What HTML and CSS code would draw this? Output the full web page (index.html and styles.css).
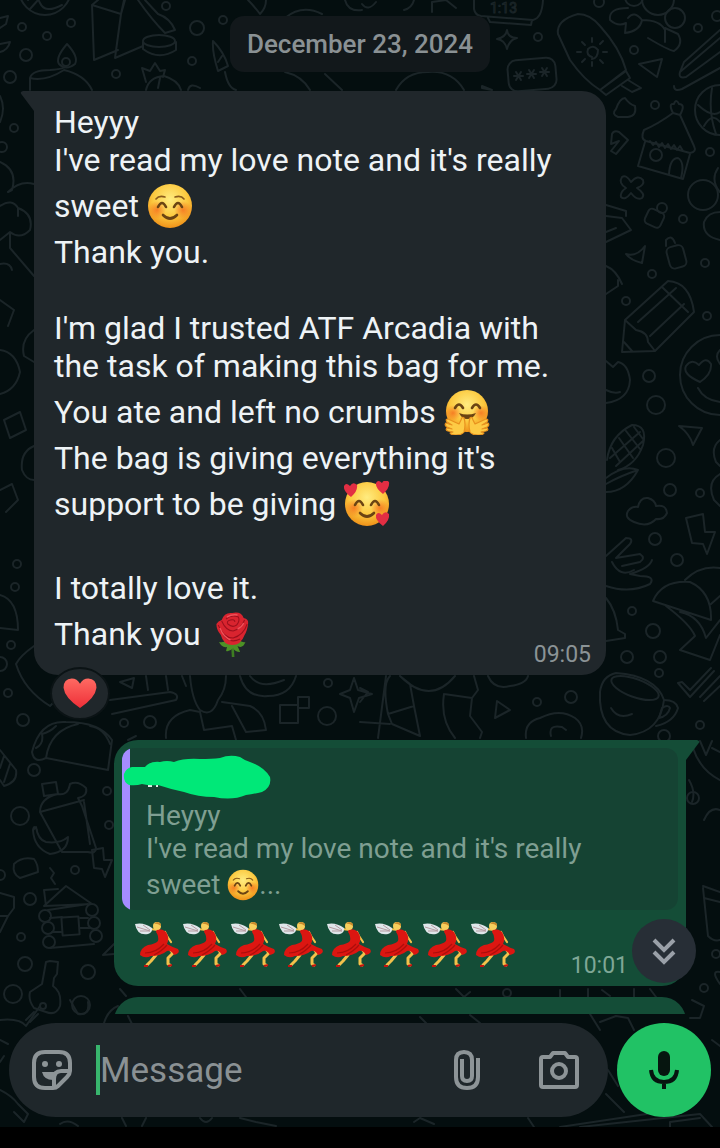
FILE: index.html
```html
<!DOCTYPE html>
<html lang="en">
<head>
    <meta charset="UTF-8">
    <meta name="viewport" content="width=device-width, initial-scale=1.0">
    <title>Chat</title>
    <link rel="stylesheet" href="styles.css">
</head>
<body>

<!-- shared emoji -->
<svg class="defs" aria-hidden="true">
    <defs>
        <radialGradient id="skin" cx="50%" cy="35%" r="65%">
            <stop offset="0" stop-color="#ffec80"/>
            <stop offset="0.6" stop-color="#fcc93f"/>
            <stop offset="1" stop-color="#ef9119"/>
        </radialGradient>
        <radialGradient id="blush">
            <stop offset="0" stop-color="#f4661b" stop-opacity="0.75"/>
            <stop offset="1" stop-color="#f4661b" stop-opacity="0"/>
        </radialGradient>
        <linearGradient id="heart-red" x1="0" y1="0" x2="0" y2="1">
            <stop offset="0" stop-color="#ff6a62"/>
            <stop offset="1" stop-color="#ee2f38"/>
        </linearGradient>
        <symbol id="face" viewBox="0 0 46 46">
            <circle cx="23" cy="23" r="22" fill="url(#skin)"/>
            <circle cx="10" cy="27" r="9" fill="url(#blush)"/>
            <circle cx="36" cy="27" r="9" fill="url(#blush)"/>
            <g fill="none" stroke="#6b4413" stroke-width="2.6" stroke-linecap="round">
                <path d="M11 24Q15 16 19 24M27 24Q31 16 35 24"/>
                <path d="M16 32Q23 39 30 32"/>
            </g>
        </symbol>
        <symbol id="smile" viewBox="0 0 46 46">
            <use href="#face"/>
            <path d="M9 16Q12 12 18 14M28 14Q34 12 37 16" fill="none" stroke="#8a5a1b" stroke-width="1.6" stroke-linecap="round"/>
        </symbol>
        <symbol id="hug" viewBox="0 0 46 46">
            <circle cx="23" cy="22" r="21" fill="url(#skin)"/>
            <circle cx="9" cy="24" r="8" fill="url(#blush)"/>
            <circle cx="37" cy="24" r="8" fill="url(#blush)"/>
            <path d="M11 19Q15 12 19 19M28 19Q32 12 36 19" fill="none" stroke="#6b4413" stroke-width="2.6" stroke-linecap="round"/>
            <path d="M15 24Q23 27 32 24Q29 30 23 30Q18 30 15 24Z" fill="#6b4413"/>
            <g fill="#fdcb45" stroke="#e8921e" stroke-width="1.2" stroke-linejoin="round">
                <path id="palm" d="M20 43Q22 35 20 29Q18 27 17 31L15 35L4 30Q1 30 3 33L8 36L2 34Q0 36 3 38L8 40L3 39Q1 41 4 42L9 43L6 44Q7 46 12 46Q18 46 20 43Z"/>
                <use href="#palm" transform="translate(46 0) scale(-1 1)"/>
            </g>
        </symbol>
        <symbol id="heart" viewBox="0 0 34 32">
            <path d="M17 31Q1 20 0 10Q0 1 8.500 0.500Q14 0.500 17 6Q20 0.500 25.500 0.500Q34 1 34 10Q33 20 17 31Z" fill="url(#heart-red)"/>
        </symbol>
        <symbol id="hearts" viewBox="0 0 46 46">
            <use href="#face"/>
            <g fill="#e22e43">
                <path id="mini" d="M7 16Q-1 10 0 5Q2 1 6 5Q9 0 13 4Q14 10 7 16Z"/>
                <use href="#mini" transform="translate(32 -3)"/>
                <use href="#mini" transform="translate(32 29)"/>
            </g>
        </symbol>
        <symbol id="rose" viewBox="0 0 46 46">
            <g transform="translate(3 0) scale(.88 1)">
                <path d="M23 30L24 46" stroke="#3d7d22" stroke-width="3"/>
                <path d="M8 31Q14 32 18 28Q24 32 29 28Q35 32 38 31Q35 38 29 35L32 41Q26 41 24 37Q20 41 16 40L17 36Q11 37 8 31Z" fill="#4d9126"/>
                <path d="M5 13Q7 10 11 9Q14 1 23 2Q33 0 36 7Q42 8 41 13Q40 20 37 24Q33 34 23 34Q13 34 10 24Q5 19 5 13Z" fill="#d9242f"/>
                <path d="M11 10Q16 20 24 20Q33 18 37 9M7 14Q13 27 24 27Q36 24 40 13M16 8Q22 3 30 6Q32 10 28 14Q23 17 18 13Q16 10 21 9Q26 8 26 11M13 24Q20 33 32 28" fill="none" stroke="#9c101d" stroke-width="1.2"/>
                <path d="M9 17Q13 26 21 29M29 18Q34 16 36 12M17 6Q23 3 29 4" fill="none" stroke="#f0525b" stroke-width="1.5"/>
            </g>
        </symbol>
        <symbol id="dancer" viewBox="0 0 48 48">
            <g fill="none" stroke="#f3c14b" stroke-width="3" stroke-linecap="round" stroke-linejoin="round">
                <path d="M23 35L18 41L14 45"/>
                <path d="M37 29L40 33L35 38L35 44L37 45"/>
                <path d="M32 12L34 16L38 22" stroke-width="2.2"/>
                <path d="M17 9L25 10" stroke-width="2.2"/>
            </g>
            <path d="M24 9Q30 9 33 12Q37 18 34 24Q39 27 45 29Q48 33 41 35Q38 30 34 31Q28 36 18 36Q12 39 7 35Q7 28 15 25Q22 24 25 21Q26 16 23 12Z" fill="#dc1611"/>
            <path d="M12 33Q23 33 31 24M21 35Q29 31 34 25" fill="none" stroke="#ad0e0c" stroke-width="1.2"/>
            <path d="M11 46L15 46M35 46L39 45" stroke="#c3130f" stroke-width="2"/>
            <path d="M2 4Q11 2 19 8Q20 12 15 14Q4 16 2 4Z" fill="#dfe6ea"/>
            <path d="M4 7L17 11M7 11L17 11M10 5L17 10" stroke="#b59ba0" stroke-width="1"/>
            <circle cx="24" cy="6" r="4" fill="#f6cf5d"/>
            <path d="M21 4Q24 0 28 4L28 6Q24 3 21 4Z" fill="#c98a2c"/>
        </symbol>
    </defs>
</svg>

<div class="app">
    <main class="screen">

        <!-- doodle wallpaper -->
        <svg class="wallpaper" viewBox="0 0 720 1127" preserveAspectRatio="xMidYMin slice" aria-hidden="true">
            <!-- top strip -->
            <circle cx="45" cy="-11" r="26"/><path d="M28 0Q35 -8 40 3T62 5M38 0L30 9"/>
            <path d="M92 5L121 14L124 0M92 5L94 60L118 50M121 14L115 58L143 46M92 5L98 0M125 0L121 14"/>
            <path d="M138 0Q152 20 165 33L175 30Q170 18 158 14L145 0"/>
            <ellipse cx="159" cy="41" rx="16" ry="6"/><path d="M143 42V49Q159 61 176 50V42"/>
            <path d="M67 44Q55 58 59 64Q66 71 75 64Q79 57 67 44Z"/><circle cx="66" cy="62" r="4"/>
            <path d="M30 90V78Q32 70 50 70Q65 69 66 66M30 78Q45 82 64 70Q85 75 92 90"/>
            <path d="M146 90Q149 77 164 76Q178 80 181 90M146 82L142 68L150 71L155 63L160 71L165 70L163 77M158 88L160 78M188 90Q190 82 200 88"/>
            <path d="M213 41Q212 52 218 71L228 66Q224 52 213 41ZM225 72Q228 88 236 90M285 72Q302 76 310 90M325 74L342 90M222 56L218 62"/>
            <path d="M248 0Q254 6 260 14Q266 8 266 0M285 18Q302 4 322 14M345 0Q348 12 362 10"/>
            <path d="M362 4Q368 12 376 2M404 10Q412 8 414 0M432 12V2L446 0L456 8M396 90Q406 72 428 72Q452 70 464 90M482 88L492 90L482 86Z"/>
            <path d="M474 0V9Q475 15 481 16L533 20Q542 18 543 0M488 18L490 22L531 25L532 20"/>
            <text x="490" y="13">1:13</text>
            <path d="M507 30Q508 38 517 38Q509 40 507 49Q505 40 497 39Q506 37 507 30Z"/>
            <rect x="508" y="59" width="48" height="31" rx="9" transform="rotate(-5 532 74)"/>
            <path d="M514 76h9M516 72l5 8M521 72l-5 8M527 74h9M529 70l5 8M534 70l-5 8M540 72h9M542 68l5 8M547 68l-5 8"/>
            <path d="M558 34Q556 20 578 14Q590 14 600 26Q620 48 626 70L600 90Q584 80 570 60ZM600 90L626 71L630 78L606 95ZM628 80L641 88L632 92L622 86"/>
            <path d="M592 57Q586 55 588 49Q593 44 598 50Q598 58 592 59M592 38v4M592 62v4M577 52h4M603 52h4M582 42l3 3M600 60l3 3M582 62l3-3M600 44l3-3"/>
            <circle cx="634" cy="-3" r="9"/><circle cx="658" cy="-1" r="16"/><circle cx="675" cy="18" r="10"/>
            <path d="M628 8Q608 8 610 20Q618 27 626 23L625 33Q640 31 642 20Q634 10 628 18M648 38Q668 50 674 51Q684 44 678 34L665 28M642 20Q660 20 665 30V42"/>
            <path d="M639 64L662 59L657 77ZM720 38L680 72Q678 79 686 77L720 52M674 86Q674 92 682 89L720 68M720 30L684 62L680 72"/>
            <!-- right column -->
            <circle cx="720" cy="110" r="25"/><path d="M698 105Q712 118 720 112M712 88Q708 112 716 134M704 126Q712 112 720 122"/>
            <path d="M616 109Q620 98 625 98Q629 104 635 106Q637 116 628 117H618Q611 114 616 109Z"/>
            <path d="M612 134Q614 130 619 132L628 140L616 154L611 151L619 141L611 144Z"/>
            <path d="M673 113Q658 124 644 130Q640 139 646 141L690 153Q697 152 694 146L680 115ZM673 113Q668 103 674 104Q676 98 679 104Q686 104 680 115M645 142L638 166L683 179L690 154M650 141l3 4 3-3 3 5 3-4 3 5 3-4 3 5 3-4 3 5 3-4 3 5"/>
            <circle cx="656" cy="155" r="6"/><path d="M669 174Q670 158 678 158Q685 162 681 178"/>
            <path d="M622 177Q626 174 631 182Q638 174 643 180Q645 185 637 188Q646 194 642 198Q637 201 631 193Q625 201 621 197Q620 192 626 188Q618 183 622 177Z"/>
            <circle cx="703" cy="195" r="15"/><path d="M718 168Q710 180 720 192"/><path d="M720 240Q702 236 704 222Q708 212 720 212"/>
            <rect x="646" y="210" width="17" height="16" rx="4" transform="rotate(25 654 218)"/><circle cx="662" cy="208" r="5"/>
            <rect x="668" y="246" width="17" height="22" rx="5" transform="rotate(-15 676 257)"/><path d="M666 246V240Q672 234 675 243"/>
            <path d="M606 205L626 211V216M606 216L622 218L631 230L606 242M606 232L616 228M626 254Q637 257 645 246L642 263Q630 260 626 254ZM606 266Q616 270 622 284"/>
            <path d="M622 352L625 320L668 281Q690 282 694 312L655 351ZM625 320L636 330Q648 332 648 342L655 351M638 322L676 288M650 336L684 304M662 287L688 312M624 342L632 351M606 294L618 286V280"/>
            <circle cx="720" cy="375" r="40"/><path d="M700 382Q682 374 686 366Q692 358 699 365Q706 356 711 364Q712 374 700 382ZM698 388Q704 400 720 402M720 364Q714 356 720 350"/>
            <path d="M606 403Q629 400 630 380Q628 364 618 362L613 367L606 361M606 390Q614 394 620 392"/>
            <path d="M607 460Q610 436 632 425Q648 425 643 445Q636 465 618 470M612 448l8 14M619 438l14 20M626 431l14 18M634 427l9 12M610 458l30-26M616 466l28-26M606 478Q624 464 638 470Q626 492 606 492M606 484Q620 476 638 470"/>
            <path d="M679 426L702 428L693 445Q690 434 679 426ZM720 440Q710 448 716 462L720 466M720 474Q706 482 714 500L720 506"/>
            <path d="M634 522Q624 518 628 511Q632 506 638 507Q640 497 648 498Q655 500 656 506Q666 504 667 513Q664 520 656 519Q648 528 634 522Z"/>
            <path d="M686 518L703 514L705 532L715 532L707 554L703 544L692 543ZM606 556L626 538Q634 538 630 544L616 558L640 554Q646 558 640 562L622 566"/>
            <path d="M606 586Q630 594 650 584Q656 576 640 576L630 574Q650 568 652 560M612 562Q620 578 634 570"/>
            <path d="M653 601Q662 580 690 582Q712 592 711 620ZM685 580Q700 565 720 568M666 606Q690 624 695 636L680 650L710 660L720 635M680 612Q700 616 706 638L720 620M711 604L720 596"/>
            <path d="M606 598Q616 610 618 630L625 634V638L606 641"/>
            <path d="M600 692Q602 676 616 673Q656 676 664 700Q660 732 630 735Q598 732 600 692Z"/><ellipse cx="635" cy="688" rx="25" ry="9" transform="rotate(20 635 688)"/>
            <path d="M664 700Q676 700 678 708Q674 722 656 726M662 708Q668 704 670 708Q668 716 659 718ZM611 708Q618 720 632 714"/>
            <path d="M678 683L690 697L714 671M678 683L682 682L690 690L711 668M700 697L720 676M704 701L720 686"/>
            <path d="M497 701L510 710L495 718ZM526 738Q524 722 540 718Q560 708 575 718Q585 725 581 738M551 736Q548 724 562 727L566 730"/>
            <!-- band between the bubbles -->
            <path d="M386 676L378 738M390 676Q382 684 388 714L414 706L410 684L400 676M388 714L392 724L420 736L414 706M360 722L390 724M400 676Q430 706 455 676M444 694Q440 720 455 738M444 694L472 698L470 716L482 732L480 738M472 698L478 690L474 676M488 676Q494 690 510 686Q526 684 528 676"/>
            <path d="M360 688L368 692L360 702M354 678L358 690L372 694L359 698L354 712L350 698L340 694L350 690Z"/>
            <rect x="280" y="705" width="18" height="18"/><rect x="298" y="697" width="11" height="11"/>
            <path d="M240 676Q246 698 268 696Q290 696 296 676M250 676Q260 690 284 680"/>
            <path d="M190 676Q192 700 200 710Q212 718 218 700Q226 690 226 676M166 738Q164 716 190 710L200 712L204 730L232 726L236 740M222 702L250 706Q264 712 266 730L246 732L232 706"/>
            <path d="M110 700L170 692Q180 694 176 700L112 714M120 682L134 678L132 688ZM146 676L148 690M168 690L166 676M182 676L186 686M128 740L136 736"/>
            <!-- left column -->
            <path d="M0 96Q6 108 0 122M0 44L10 42Q8 50 0 52M0 18L8 16L6 24L0 28"/>
            <path d="M0 162Q18 170 12 190L8 192M8 192Q20 180 34 184M0 206Q12 198 18 208V216M18 208Q34 214 30 230Q20 240 10 232L0 240M10 232V248L34 276M0 264Q10 262 12 270"/>
            <path d="M0 300L14 310L8 326M34 330Q20 340 24 356L34 362M0 350Q16 352 20 372Q16 390 0 394M4 420L20 412L26 430L10 438ZM34 446Q20 452 22 470Q26 480 34 480M0 490L12 484L18 500L6 512"/>
            <path d="M0 595Q18 600 18 630L0 628M34 646Q20 656 16 664Q24 690 50 706L62 694"/>
            <path d="M32 752Q40 720 66 722Q100 722 112 740L108 770L46 758Q34 764 32 752ZM46 758Q50 730 78 724M36 748Q44 744 42 734Q50 732 56 726M90 726Q104 728 110 744"/>
            <path d="M0 750L16 770Q18 782 4 786L0 780M4 756L0 768M10 764L4 782"/>
            <path d="M42 784L56 782L58 794L44 796ZM40 812Q40 798 58 794Q68 796 70 784Q78 780 86 788Q88 796 78 798L82 806L96 848Q96 854 88 852L62 852L40 812ZM40 812L84 800M84 802L90 844"/>
            <path d="M36 827Q38 840 46 842Q60 844 68 837Q68 852 50 854Q34 848 33 830ZM33 830Q34 824 37 830"/>
            <path d="M14 864Q22 856 34 859Q38 864 38 872L20 878Q12 874 14 864ZM92 850L103 848L104 860L112 860L105 877L102 869L94 868Z"/>
            <path d="M50 868L54 873L51 878L55 884M44 906L66 886L92 904ZM46 906L44 890L58 889M48 910L88 904M50 918L62 917M52 932L62 932M80 918L88 918M80 928L90 928M50 948L94 944"/>
            <rect x="62" y="917" width="17" height="18" transform="rotate(-4 70 926)"/>
            <circle cx="45" cy="916" r="6"/><circle cx="48" cy="928" r="6"/><circle cx="49" cy="942" r="6"/><circle cx="92" cy="910" r="6"/><circle cx="94" cy="923" r="6"/><circle cx="96" cy="936" r="6"/>
            <path d="M0 893L14 897V908L8 916H0M8 916L0 932M114 944L103 955L114 954"/>
            <path d="M46 962L50 961L58 962L57 974L54 978L53 986Q62 992 60 1006Q56 1016 46 1012L34 1008Q28 1000 30 992L42 984ZM34 1012L26 1020M38 1014L30 1022"/><circle cx="43" cy="1006" r="3"/>
            <!-- right edge and bottom band -->
            <path d="M693 748Q700 770 720 780M700 741L706 755L712 741M712 748L720 752M689 780Q696 792 692 802M704 820Q710 806 720 810M703 886L720 892M703 888L708 936Q714 942 720 940M704 898L720 902M720 972Q710 970 720 984M692 1000L704 1006L700 1018L690 1018"/>
            <path d="M456 989L464 997L470 992M560 990V997M588 989V998M602 990L610 996M634 989V997M650 989L656 997M120 989L126 996M240 989L246 997"/>
            <path d="M0 1020Q20 1018 26 1026L40 1006M70 1000L78 1014Q90 1016 88 1002M104 1023Q108 1010 118 1006M600 1022L616 1016L628 1018L634 1030M590 1014L600 1030M128 1016L132 1024M420 1017L426 1023M470 1015L480 1023"/>
            <path d="M0 1040L8 1044M4 1056L0 1062M0 1090Q12 1096 18 1104L28 1114L24 1122L14 1112M60 1124Q68 1118 78 1126M122 1118L126 1126M146 1118L142 1126M200 1118Q206 1126 212 1118M240 1118L256 1122L276 1126M414 1122L420 1118L434 1124M528 1118L534 1127M560 1127L660 1112M580 1127L700 1114L712 1127M606 1094L624 1112M608 1070L618 1086M712 1040L720 1046M670 1127V1122L700 1118"/>
            <!-- small circles -->
            <g>
                <circle cx="22" cy="27" r="4"/><circle cx="71" cy="23" r="4"/><circle cx="47" cy="36" r="4"/><circle cx="166" cy="6" r="4"/><circle cx="26" cy="55" r="6"/><circle cx="10" cy="77" r="6"/>
                <circle cx="197" cy="28" r="7"/><circle cx="192" cy="61" r="4"/><circle cx="116" cy="74" r="4"/><circle cx="223" cy="20" r="4"/><circle cx="14" cy="128" r="4"/><circle cx="2" cy="147" r="5"/>
                <circle cx="538" cy="37" r="4"/><circle cx="599" cy="2" r="5"/><circle cx="634" cy="50" r="4"/><circle cx="698" cy="28" r="4"/><circle cx="655" cy="105" r="4"/><circle cx="710" cy="152" r="4"/>
                <circle cx="717" cy="16" r="5"/><circle cx="683" cy="219" r="4"/><circle cx="652" cy="274" r="4"/><circle cx="705" cy="263" r="4"/><circle cx="626" cy="301" r="4"/><circle cx="707" cy="316" r="4"/>
                <circle cx="649" cy="376" r="6"/><circle cx="656" cy="405" r="9"/><circle cx="666" cy="458" r="9"/><circle cx="670" cy="490" r="6"/><circle cx="700" cy="493" r="4"/><circle cx="655" cy="539" r="6"/>
                <circle cx="677" cy="560" r="6"/><circle cx="632" cy="611" r="4"/><circle cx="653" cy="631" r="7"/><circle cx="627" cy="657" r="6"/><circle cx="660" cy="657" r="6"/><circle cx="659" cy="673" r="4"/>
                <circle cx="571" cy="697" r="6"/><circle cx="537" cy="702" r="4"/><circle cx="700" cy="725" r="4"/><circle cx="664" cy="736" r="6"/><circle cx="327" cy="716" r="9"/><circle cx="328" cy="683" r="4"/>
                <circle cx="150" cy="722" r="6"/><circle cx="124" cy="723" r="4"/><circle cx="23" cy="720" r="6"/><circle cx="8" cy="693" r="4"/><circle cx="17" cy="564" r="4"/><circle cx="15" cy="587" r="4"/>
                <circle cx="11" cy="645" r="4"/><circle cx="0" cy="664" r="7"/><circle cx="34" cy="770" r="6"/><circle cx="107" cy="791" r="4"/><circle cx="20" cy="816" r="9"/><circle cx="109" cy="825" r="4"/>
                <circle cx="75" cy="870" r="4"/><circle cx="30" cy="899" r="6"/><circle cx="21" cy="937" r="4"/><circle cx="25" cy="964" r="7"/><circle cx="88" cy="972" r="7"/><circle cx="13" cy="994" r="9"/>
                <circle cx="81" cy="1005" r="9"/><circle cx="0" cy="875" r="5"/><circle cx="693" cy="798" r="6"/><circle cx="716" cy="954" r="4"/><circle cx="704" cy="988" r="4"/><circle cx="507" cy="993" r="4"/>
            </g>
        </svg>

        <section class="messages">
            <time class="date" datetime="2024-12-23">December 23, 2024</time>

            <article class="bubble incoming">
                <svg class="tail" viewBox="0 0 14 20" aria-hidden="true"><path d="M14 0H3Q-1 1 2 4L14 20Z"/></svg>
                <p class="text">Heyyy<br>
                    I've read my love note and it's really<br>
                    sweet <svg class="emoji" role="img" aria-label="smiling face"><use href="#smile"/></svg><br>
                    Thank you.<br>
                    <br>
                    I'm glad I trusted ATF Arcadia with<br>
                    the task of making this bag for me.<br>
                    You ate and left no crumbs <svg class="emoji" role="img" aria-label="hugging face"><use href="#hug"/></svg><br>
                    The bag is giving everything it's<br>
                    support to be giving <svg class="emoji" role="img" aria-label="smiling face with hearts"><use href="#hearts"/></svg><br>
                    <br>
                    I totally love it.<br>
                    Thank you <svg class="emoji" role="img" aria-label="rose"><use href="#rose"/></svg></p>
                <time class="time">09:05</time>
                <button class="reaction" type="button" aria-label="1 reaction"><svg><use href="#heart"/></svg></button>
            </article>

            <article class="bubble outgoing">
                <svg class="tail" viewBox="0 0 14 20" aria-hidden="true"><path d="M0 0H11Q15 1 12 4L0 20Z"/></svg>
                <blockquote class="quote">
                    <svg class="scribble" viewBox="0 0 150 44" aria-hidden="true">
                        <path d="M26 29h4v3h-4zM34 30h2v2h-2z" fill="#e3ebe7"/>
                        <path d="M10 12L23 12Q28 6 38 7Q45 5 52 7Q62 3 78 4Q90 4 98 3Q108 -1 118 2Q122 5 128 7Q142 12 148 22Q150 32 140 37Q132 39 124 40Q110 46 92 42Q76 42 62 37Q48 34 36 30Q28 31 20 29Q14 31 7 30Q1 27 2 19Q4 13 10 12Z"/>
                    </svg>
                    <p>Heyyy<br>
                        I've read my love note and it's really<br>
                        sweet <svg class="emoji small" role="img" aria-label="smiling face"><use href="#smile"/></svg>...</p>
                </blockquote>
                <div class="dancers" role="img" aria-label="eight dancers">
                    <svg><use href="#dancer"/></svg>
                    <svg><use href="#dancer"/></svg>
                    <svg><use href="#dancer"/></svg>
                    <svg><use href="#dancer"/></svg>
                    <svg><use href="#dancer"/></svg>
                    <svg><use href="#dancer"/></svg>
                    <svg><use href="#dancer"/></svg>
                    <svg><use href="#dancer"/></svg>
                </div>
                <time class="time">10:01</time>
            </article>

            <article class="bubble outgoing next"></article>
        </section>

        <form class="composer">
            <button class="scroll-down" type="button" aria-label="Scroll to latest">
                <svg viewBox="0 0 26 28"><path d="M3 3L13 13L23 3M3 15L13 25L23 15"/></svg>
            </button>
            <div class="field">
                <button class="icon" type="button" aria-label="Stickers">
                    <svg viewBox="0 0 42 42">
                        <path d="M14 3H28Q39 3 39 14V22Q39 25 36 28L27 37Q25 39 22 39H14Q3 39 3 28V14Q3 3 14 3Z"/>
                        <path d="M38 22H30Q23 22 23 30V38"/>
                        <path class="solid" d="M11 23H26Q22 26 22 31Q13 31 11 23Z"/>
                        <circle class="solid" cx="14" cy="15" r="3"/><circle class="solid" cx="28" cy="15" r="3"/>
                    </svg>
                </button>
                <span class="caret"></span>
                <input type="text" placeholder="Message" aria-label="Message">
                <button class="icon" type="button" aria-label="Attach">
                    <svg viewBox="0 0 42 42"><path d="M32 9V28Q32 39 21 39Q10 39 10 28V11Q10 3 18 3Q26 3 26 11V27Q26 32 21 32Q16 32 16 27V10"/></svg>
                </button>
                <button class="icon camera" type="button" aria-label="Camera">
                    <svg viewBox="0 0 42 42"><path d="M5 8H12L15 4H27L30 8H37Q39 8 39 10V36Q39 38 37 38H5Q3 38 3 36V10Q3 8 5 8Z"/><circle cx="21" cy="22" r="7"/></svg>
                </button>
            </div>
            <button class="mic" type="button" aria-label="Record voice message">
                <svg viewBox="0 0 30 40"><rect x="9" y="1" width="12" height="25" rx="6"/><path d="M2 20Q3 32 15 32Q27 32 28 20M15 32V39"/></svg>
            </button>
        </form>
    </main>
    <div class="system-bar"></div>
</div>

</body>
</html>
```
FILE: styles.css
```css
* {
    box-sizing: border-box;
}
body {
    margin: 0;
    background: #000;
    font-family: Roboto, "Liberation Sans", sans-serif;
    color: #eef3f6;
}
button {
    border: 0;
    padding: 0;
    background: none;
    cursor: pointer;
}
.defs {
    position: absolute;
    width: 0;
    height: 0;
}
.app {
    display: flex;
    flex-direction: column;
    height: 100vh;
}
.screen {
    position: relative;
    flex: 1;
    min-height: 0;
    display: flex;
    flex-direction: column;
    overflow: hidden;
    background: #040e0f;
}
.system-bar {
    height: 21px;
    background: #000;
}
.wallpaper {
    position: absolute;
    inset: 0;
    width: 100%;
    height: 100%;
    fill: none;
    stroke: #1b2528;
    stroke-width: 2;
    stroke-linejoin: round;
    stroke-linecap: round;
}
.wallpaper text {
    font-size: 14px;
    stroke-width: 1;
}

/* messages */
.messages {
    position: relative;
    flex: 1;
    min-height: 0;
    display: flex;
    flex-direction: column;
    overflow: hidden;
    padding: 16px 34px 0;
}
.date {
    align-self: center;
    padding: 0 17px;
    border-radius: 14px;
    background: #12181b;
    color: #8a9194;
    font-size: 26px;
    font-weight: 500;
    line-height: 56px;
}
.bubble {
    position: relative;
    display: grid;
    border-radius: 24px;
}
.incoming {
    margin: 19px 80px 0 0;
    padding: 12px 15px 14px 20px;
    border-top-left-radius: 0;
    background: #20272b;
}
.outgoing {
    margin: 65px 0 0 80px;
    padding: 8px 8px 18px;
    border-top-right-radius: 0;
    background: #144d37;
}
.next {
    flex: none;
    height: 60px;
    margin-top: 11px;
    border-top-right-radius: 24px;
}
.tail {
    position: absolute;
    top: 0;
    width: 14px;
    height: 20px;
}
.incoming .tail {
    right: 100%;
    fill: #20272b;
}
.outgoing .tail {
    left: 100%;
    fill: #144d37;
}
.text {
    grid-area: 1 / 1;
    margin: 0;
    font-size: 32px;
    line-height: 38px;
}
.emoji {
    width: 46px;
    height: 54px;
    padding: 4px 0;
    vertical-align: -16px;
}
.emoji.small {
    width: 32px;
    height: 40px;
    vertical-align: -11px;
}
.time {
    align-self: end;
    justify-self: end;
    color: #8b9396;
    font-size: 23px;
    line-height: 28px;
}
.incoming .time {
    grid-area: 1 / 1;
    margin-bottom: -8px;
}
.outgoing .time {
    grid-area: 2 / 1;
    margin: 0 50px -12px 0;
    color: #7fa796;
}
.reaction {
    position: absolute;
    left: 16px;
    bottom: -45px;
    width: 60px;
    height: 53px;
    border: 2px solid #0b1315;
    border-radius: 50%;
    background: #20272b;
}
.reaction svg {
    display: block;
    width: 34px;
    height: 31px;
    margin: 0 auto;
}

.quote {
    margin: 0;
    padding: 7px 8px 5px 24px;
    border-radius: 12px;
    background: linear-gradient(90deg, #a58cff 8px, #154333 8px);
    color: #7f9f92;
}
.quote p {
    margin: 0;
    font-size: 28px;
    line-height: 33px;
}
.scribble {
    display: block;
    width: 150px;
    height: 44px;
    margin-left: -24px;
    fill: #00e878;
}
.dancers {
    grid-area: 2 / 1;
    display: flex;
    padding: 10px 0 0 11px;
}
.dancers svg {
    width: 48px;
    height: 48px;
}

/* composer */
.composer {
    position: relative;
    display: flex;
    gap: 9px;
    margin: 0;
    padding: 9px 9px 10px;
}
.field {
    flex: 1;
    min-width: 0;
    display: flex;
    align-items: center;
    height: 94px;
    padding: 0 28px 0 22px;
    border-radius: 47px;
    background: #1f272b;
}
.icon {
    flex: none;
}
.icon svg {
    display: block;
    width: 42px;
    height: 42px;
    fill: none;
    stroke: #8d9497;
    stroke-width: 4;
    stroke-linejoin: round;
}
.icon .solid {
    fill: #8d9497;
    stroke: none;
}
.caret {
    flex: none;
    width: 4px;
    height: 50px;
    margin-left: 23px;
    background: #38b56d;
}
.field input {
    flex: 1;
    width: 100%;
    min-width: 0;
    border: 0;
    outline: 0;
    padding: 0;
    background: none;
    color: #eef3f6;
    font-family: inherit;
    font-size: 35px;
}
.field input::placeholder {
    color: #8a9194;
    opacity: 1;
}
.camera {
    margin-left: 50px;
}
.mic {
    flex: none;
    display: flex;
    align-items: center;
    justify-content: center;
    width: 94px;
    height: 94px;
    border-radius: 50%;
    background: #21c265;
}
.mic svg {
    width: 30px;
    height: 40px;
    fill: #06150f;
}
.mic path {
    fill: none;
    stroke: #06150f;
    stroke-width: 4;
}
.scroll-down {
    position: absolute;
    right: 24px;
    bottom: 144px;
    display: flex;
    align-items: center;
    justify-content: center;
    width: 64px;
    height: 64px;
    border-radius: 50%;
    background: #272e36;
}
.scroll-down svg {
    width: 26px;
    height: 28px;
    fill: none;
    stroke: #9aa0a8;
    stroke-width: 4;
}
```
